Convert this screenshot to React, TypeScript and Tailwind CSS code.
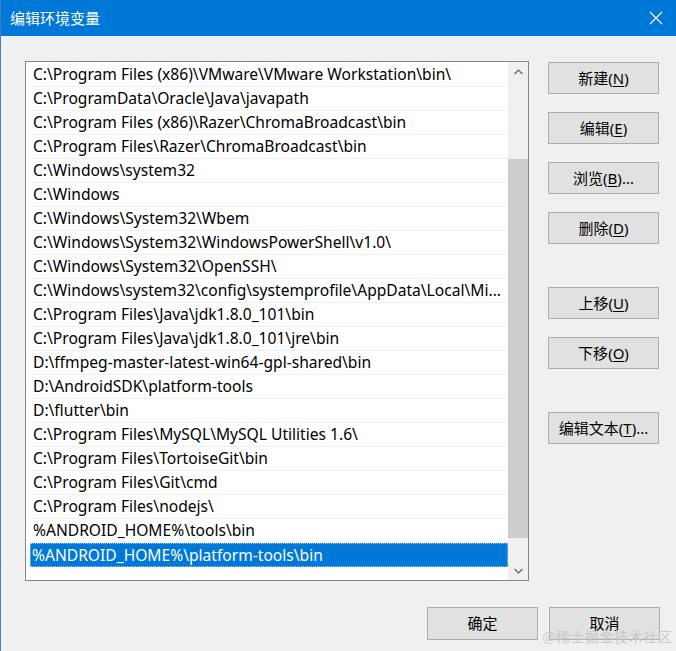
import React from "react";

const rows = [
  "C:\\Program Files (x86)\\VMware\\VMware Workstation\\bin\\",
  "C:\\ProgramData\\Oracle\\Java\\javapath",
  "C:\\Program Files (x86)\\Razer\\ChromaBroadcast\\bin",
  "C:\\Program Files\\Razer\\ChromaBroadcast\\bin",
  "C:\\Windows\\system32",
  "C:\\Windows",
  "C:\\Windows\\System32\\Wbem",
  "C:\\Windows\\System32\\WindowsPowerShell\\v1.0\\",
  "C:\\Windows\\System32\\OpenSSH\\",
  "C:\\Windows\\system32\\config\\systemprofile\\AppData\\Local\\Mi...",
  "C:\\Program Files\\Java\\jdk1.8.0_101\\bin",
  "C:\\Program Files\\Java\\jdk1.8.0_101\\jre\\bin",
  "D:\\ffmpeg-master-latest-win64-gpl-shared\\bin",
  "D:\\AndroidSDK\\platform-tools",
  "D:\\flutter\\bin",
  "C:\\Program Files\\MySQL\\MySQL Utilities 1.6\\",
  "C:\\Program Files\\TortoiseGit\\bin",
  "C:\\Program Files\\Git\\cmd",
  "C:\\Program Files\\nodejs\\",
  "%ANDROID_HOME%\\tools\\bin",
  "%ANDROID_HOME%\\platform-tools\\bin",
];

const font = { fontFamily: '"Noto Sans", "Noto Sans CJK SC", sans-serif' };

function Btn({ label, k, suffix = "" }: { label: string; k?: string; suffix?: string }) {
  return (
    <div className="w-[111px] h-[32px] bg-[#e1e1e1] border border-[#adadad] flex items-center justify-center text-[15px] text-black leading-none">
      <span>
        {label}
        {k ? (
          <>
            (<span className="underline underline-offset-2">{k}</span>)
          </>
        ) : null}
        {suffix}
      </span>
    </div>
  );
}

export default function App() {
  return (
    <div
      className="w-[676px] h-[651px] bg-[#f0f0f0] flex flex-col border-l border-[#3d7fc0] relative overflow-hidden"
      style={font}
    >
      <div className="h-[36px] bg-[#0078d7] flex items-center justify-between pl-[9px] pr-[13px] shrink-0">
        <span className="text-white text-[15px]">编辑环境变量</span>
        <svg width="14" height="14" viewBox="0 0 14 14">
          <path d="M1 1 L13 13 M13 1 L1 13" stroke="white" strokeWidth="1.2" fill="none" />
        </svg>
      </div>
      <div className="flex pt-[25px] pl-[24px]">
        <div className="w-[504px] h-[520px] border border-[#828790] bg-white flex">
          <div className="flex-1 flex flex-col pt-[1px] pl-[4px]">
            {rows.map((r, i) => {
              const sel = i === rows.length - 1;
              return (
                <div
                  key={i}
                  className={
                    sel
                      ? "h-[24px] bg-[#0078d7] text-white border border-dotted border-[#9ec8f0] flex items-center pl-[1px] pt-[1px] text-[15.6px] whitespace-nowrap overflow-hidden"
                      : "h-[24px] border-b border-[#f0f0f0] flex items-center pl-[3px] pt-[1px] text-[15.6px] text-black whitespace-nowrap overflow-hidden"
                  }
                >
                  {r}
                </div>
              );
            })}
          </div>
          <div className="w-[20px] bg-[#f0f0f0] flex flex-col shrink-0">
            <div className="h-[20px] flex items-center justify-center">
              <svg width="9" height="6" viewBox="0 0 9 6">
                <path d="M0.5 5 L4.5 1 L8.5 5" stroke="#606060" strokeWidth="1.2" fill="none" />
              </svg>
            </div>
            <div className="h-[77px]" />
            <div className="h-[379px] bg-[#cdcdcd] mx-[0px]" />
            <div className="flex-1 flex items-end justify-center pb-[6px]">
              <svg width="9" height="6" viewBox="0 0 9 6">
                <path d="M0.5 1 L4.5 5 L8.5 1" stroke="#606060" strokeWidth="1.2" fill="none" />
              </svg>
            </div>
          </div>
        </div>
        <div className="ml-[19px] pt-[1px] flex flex-col">
          <Btn label="新建" k="N" />
          <div className="h-[18px]" />
          <Btn label="编辑" k="E" />
          <div className="h-[18px]" />
          <Btn label="浏览" k="B" suffix="..." />
          <div className="h-[18px]" />
          <Btn label="删除" k="D" />
          <div className="h-[43px]" />
          <Btn label="上移" k="U" />
          <div className="h-[18px]" />
          <Btn label="下移" k="O" />
          <div className="h-[43px]" />
          <Btn label="编辑文本" k="T" suffix="..." />
        </div>
      </div>
      <div className="flex justify-end pt-[26px] pr-[16px] gap-[11px]">
        <div className="w-[111px] h-[33px] bg-[#e1e1e1] border border-[#adadad] flex items-center justify-center text-[15px]">
          确定
        </div>
        <div className="w-[111px] h-[33px] bg-[#e1e1e1] border border-[#adadad] flex items-center justify-center text-[15px]">
          取消
        </div>
      </div>
      <div className="absolute right-[4px] bottom-[4px] text-[14px] text-[#c8c8c8] tracking-[0.5px]" style={{ fontFamily: '"Noto Sans CJK SC", serif' }}>
        @稀土掘金技术社区
      </div>
    </div>
  );
}
